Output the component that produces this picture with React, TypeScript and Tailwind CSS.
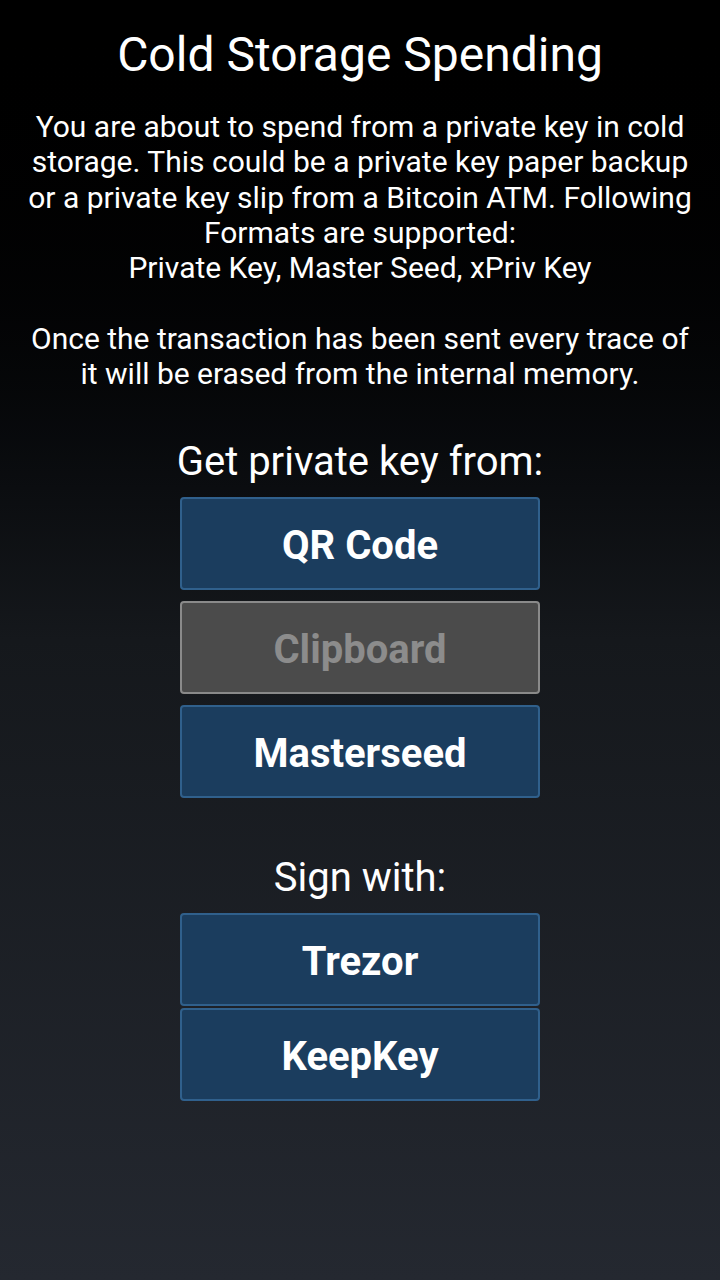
import React from "react";

function Btn({ label, disabled }: { label: string; disabled?: boolean }) {
  return (
    <div
      className={
        disabled
          ? "w-[360px] h-[93px] pt-[5px] rounded-[4px] border-2 border-[#8a8a8a] bg-[#4b4b4b] flex items-center justify-center text-[40px] font-bold text-[#8c8c8c]"
          : "w-[360px] h-[93px] pt-[5px] rounded-[4px] border-2 border-[#30608c] bg-[#1b3d5e] flex items-center justify-center text-[40px] font-bold text-white"
      }
    >
      {label}
    </div>
  );
}

export default function App() {
  return (
    <div
      className="w-[720px] h-[1280px] flex flex-col items-center text-white bg-gradient-to-b from-[#000000] via-[#15181c] to-[#242830]"
      style={{ fontFamily: "Roboto, 'Noto Sans', sans-serif" }}
    >
      <h1 className="mt-[27px] text-[48px] leading-[56px] font-normal">Cold Storage Spending</h1>
      <p className="mt-[26px] px-[20px] text-[30px] leading-[35.3px] text-center">
        You are about to spend from a private key in cold storage. This could be a private key paper backup or a private key slip from a Bitcoin ATM. Following Formats are supported:
        <br />
        Private Key, Master Seed, xPriv Key
        <br />
        <br />
        Once the transaction has been sent every trace of it will be erased from the internal memory.
      </p>
      <div className="mt-[47px] text-[40px] leading-[48px]">Get private key from:</div>
      <div className="mt-[11px] flex flex-col gap-[11px]">
        <Btn label="QR Code" />
        <Btn label="Clipboard" disabled />
        <Btn label="Masterseed" />
      </div>
      <div className="mt-[56px] text-[40px] leading-[48px]">Sign with:</div>
      <div className="mt-[11px] flex flex-col gap-[2px]">
        <Btn label="Trezor" />
        <Btn label="KeepKey" />
      </div>
    </div>
  );
}
